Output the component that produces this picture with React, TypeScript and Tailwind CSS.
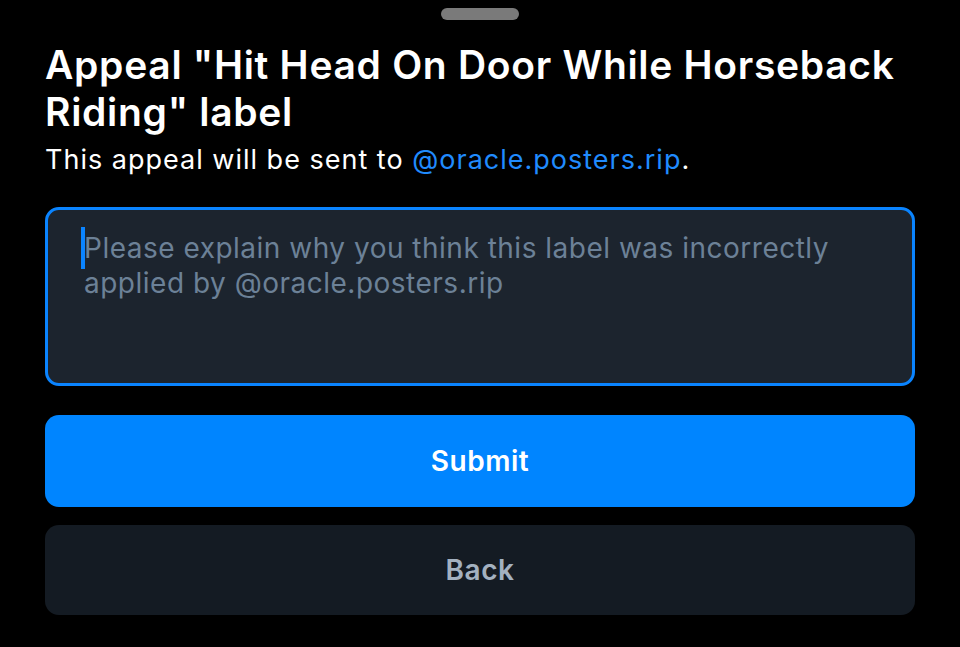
// Appeal label sheet — bottom sheet for appealing a moderation label.

const SUBJECT = "Hit Head On Door While Horseback Riding";
const HANDLE = "@oracle.posters.rip";

export default function App() {
  return (
    <div
      className="min-h-[647px] w-[960px] bg-black px-[45px] text-white"
      style={{ fontFamily: "Inter, 'Noto Sans', sans-serif" }}
    >
      <div className="flex justify-center pt-[8px]">
        <div className="h-[12px] w-[78px] rounded-full bg-[#7a7a7a]" />
      </div>

      <h1 className="mt-[21px] text-[39px] font-semibold leading-[47px] tracking-[0.7px]">
        Appeal "{SUBJECT}" label
      </h1>
      <p className="mt-[7px] text-[27px] leading-[36px] tracking-[1px]">
        This appeal will be sent to <span className="text-[#208bfe]">{HANDLE}</span>.
      </p>

      <div className="mt-[29px] h-[179px] rounded-[14px] border-[3px] border-[#0a84ff] bg-[#1c242e] pl-[36px] pr-[20px] pt-[21px]">
        <p className="relative text-[28px] leading-[35px] tracking-[0.5px] text-[#6c8197]">
          <span className="absolute left-[-3px] top-[-4px] h-[42px] w-[4px] bg-[#0a84ff]" />
          Please explain why you think this label was incorrectly applied by {HANDLE}
        </p>
      </div>

      <button className="mt-[29px] flex h-[92px] w-full items-center justify-center rounded-[14px] bg-[#0085ff] text-[28px] font-semibold tracking-[0.5px] text-white">
        Submit
      </button>
      <button className="mt-[18px] flex h-[90px] w-full items-center justify-center rounded-[14px] bg-[#141b23] text-[28px] font-semibold tracking-[0.5px] text-[#a3b1c0]">
        Back
      </button>
    </div>
  );
}
